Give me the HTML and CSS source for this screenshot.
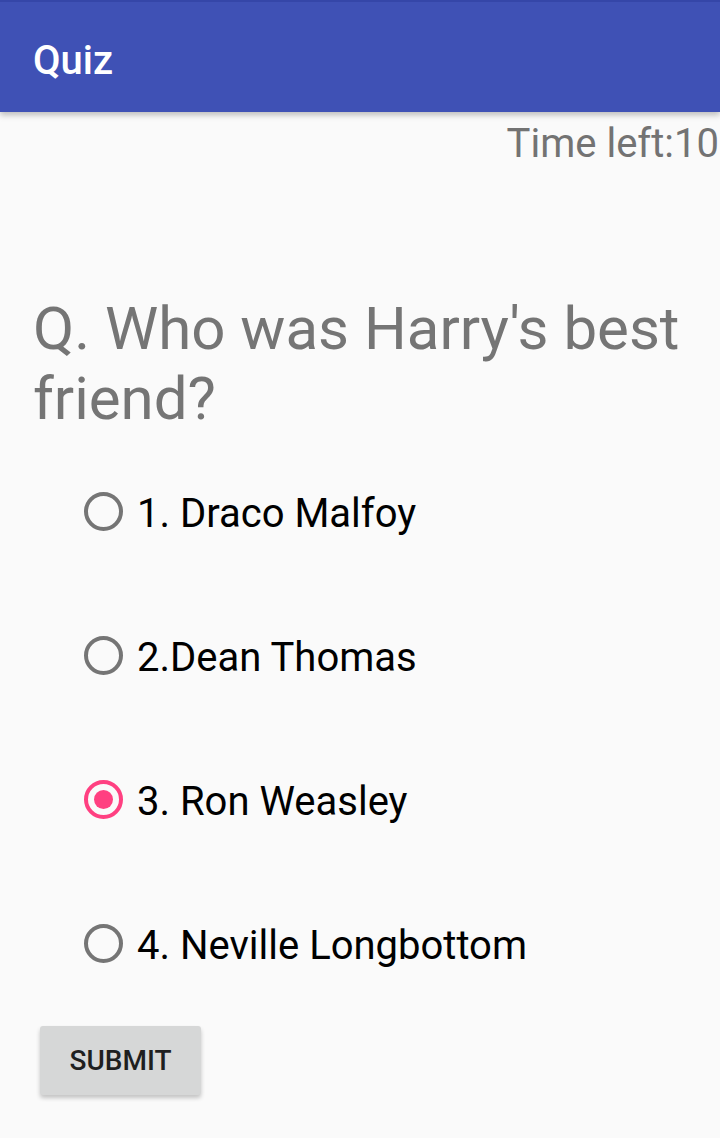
FILE: index.html
```html
<!DOCTYPE html>
<html>
<head>
<meta charset="utf-8">
<link rel="stylesheet" href="styles.css">
</head>
<body>
<header class="toolbar"><span class="title">Quiz</span></header>
<main class="content">
  <div class="timer">Time left:10</div>
  <h1 class="question">Q. Who was Harry's best friend?</h1>
  <div class="options">
    <div class="option"><span class="radio"></span><span class="label">1. Draco Malfoy</span></div>
    <div class="option"><span class="radio"></span><span class="label">2.Dean Thomas</span></div>
    <div class="option"><span class="radio checked"></span><span class="label">3. Ron Weasley</span></div>
    <div class="option"><span class="radio"></span><span class="label">4. Neville Longbottom</span></div>
  </div>
  <button class="submit">SUBMIT</button>
</main>
</body>
</html>
```
FILE: styles.css
```css
html, body {
  margin: 0;
  padding: 0;
  background: #fafafa;
  font-family: Roboto, "Noto Sans", sans-serif;
  width: 720px;
  height: 1138px;
  overflow: hidden;
}
.toolbar {
  height: 110px;
  box-sizing: content-box;
  border-top: 2px solid #3546a8;
  background: #3f51b5;
  display: flex;
  align-items: center;
  padding-left: 33px;
  box-shadow: 0 3px 6px rgba(0,0,0,0.25);
  position: relative;
  z-index: 1;
}
.title {
  color: #ffffff;
  font-size: 40px;
  font-weight: 500;
  line-height: normal;
  padding-top: 6px;
}
.content {
  display: flex;
  flex-direction: column;
}
.timer {
  align-self: flex-end;
  margin-top: 8px;
  margin-right: 1px;
  font-size: 40px;
  line-height: normal;
  color: #737373;
}
.question {
  margin: 127px 0 0 0;
  padding: 0 33px;
  font-size: 60px;
  font-weight: 400;
  line-height: 70px;
  color: #757575;
}
.options {
  margin-top: 7px;
  padding-left: 84px;
  display: flex;
  flex-direction: column;
}
.option {
  height: 144px;
  display: flex;
  align-items: center;
  gap: 14px;
}
.radio {
  width: 39px;
  height: 39px;
  box-sizing: border-box;
  border: 4px solid #757575;
  border-radius: 50%;
  display: flex;
  align-items: center;
  justify-content: center;
  margin-top: -3px;
}
.radio.checked {
  border-color: #ff4081;
}
.radio.checked::after {
  content: "";
  width: 19px;
  height: 19px;
  border-radius: 50%;
  background: #ff4081;
}
.label {
  font-size: 40px;
  line-height: normal;
  color: #000000;
}
.submit {
  align-self: flex-start;
  margin: 9px 0 0 40px;
  width: 161px;
  height: 69px;
  border: none;
  border-radius: 3px;
  background: #d6d7d7;
  box-shadow: 0 3px 4px rgba(0,0,0,0.22);
  font-family: Roboto, "Noto Sans", sans-serif;
  font-size: 28px;
  font-weight: 500;
  color: #1f1f1f;
  padding: 0;
}
```
